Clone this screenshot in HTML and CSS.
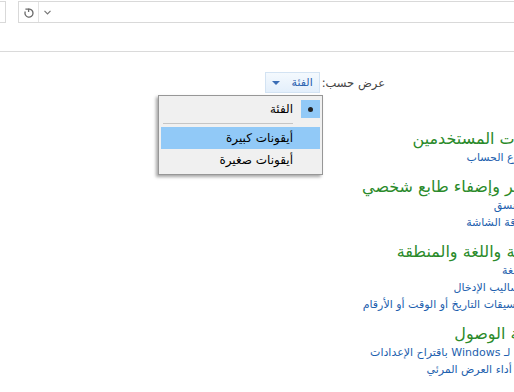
FILE: index.html
```html
<!DOCTYPE html>
<html lang="ar">
<head>
    <meta charset="UTF-8">
    <meta name="viewport" content="width=device-width, initial-scale=1.0">
    <title>لوحة التحكم</title>
    <link rel="stylesheet" href="styles.css">
</head>
<body>
    <div class="toolbar">
        <div class="search-box"></div>
        <div class="address-bar">
            <span class="refresh">
                <svg width="12" height="12" viewBox="0 0 12 12">
                    <path d="M5.3 3.2A4 4 0 1 1 2.3 5.6" fill="none" stroke="#6a6a6a" stroke-width="1.3"/>
                    <path d="M2.4 3.2H5.6V6" fill="none" stroke="#6a6a6a" stroke-width="1.3"/>
                </svg>
            </span>
            <span class="history">
                <svg width="7" height="5" viewBox="0 0 7 5">
                    <polyline points="0.5,0.8 3.5,3.8 6.5,0.8" fill="none" stroke="#777" stroke-width="1.2"/>
                </svg>
            </span>
        </div>
    </div>
    <div class="divider"></div>

    <div class="view-bar">
        <button class="view-button"><span class="caret"></span><span>الفئة</span></button>
        <span class="view-label">عرض حسب:</span>
    </div>

    <ul class="menu">
        <li class="menu-item checked"><span class="gutter"><span class="dot"></span></span><span class="menu-text">الفئة</span></li>
        <li class="menu-sep"></li>
        <li class="menu-item active"><span class="gutter"></span><span class="menu-text">أيقونات كبيرة</span></li>
        <li class="menu-item"><span class="gutter"></span><span class="menu-text">أيقونات صغيرة</span></li>
    </ul>

    <div class="categories">
        <div class="category">
            <h3>حسابات المستخدمين</h3>
            <a href="#">تغيير نوع الحساب</a>
        </div>
        <div class="category">
            <h3>المظهر وإضفاء طابع شخصي</h3>
            <a href="#">تغيير النسق</a>
            <a href="#">ضبط دقة الشاشة</a>
        </div>
        <div class="category">
            <h3>الساعة واللغة والمنطقة</h3>
            <a href="#">إضافة لغة</a>
            <a href="#">تغيير أساليب الإدخال</a>
            <a href="#">تغيير تنسيقات التاريخ أو الوقت أو الأرقام</a>
        </div>
        <div class="category">
            <h3>سهولة الوصول</h3>
            <a href="#">السماح لـ Windows باقتراح الإعدادات</a>
            <a href="#">تحسين أداء العرض المرئي</a>
        </div>
    </div>
</body>
</html>
```

FILE: styles.css
```css
body {
    margin: 0;
    width: 514px;
    height: 392px;
    overflow: hidden;
    position: relative;
    background: #fff;
    font-family: "DejaVu Sans", sans-serif;
    color: #000;
}
.toolbar {
    display: flex;
    gap: 12px;
    padding-top: 1px;
    height: 23px;
    box-sizing: border-box;
}
.search-box {
    width: 5px;
    height: 20px;
    border: 1px solid #d9d9d9;
    border-left: none;
}
.address-bar {
    flex: 1;
    display: flex;
    align-items: center;
    height: 20px;
    margin-right: -4px;
    border: 1px solid #d9d9d9;
}
.refresh {
    width: 19px;
    height: 100%;
    display: flex;
    align-items: center;
    justify-content: center;
    border-right: 1px solid #e3e3e3;
}
.history {
    display: flex;
    padding-left: 5px;
}
.divider {
    margin-top: 28px;
    height: 1px;
    background: #dadada;
}
.view-bar {
    display: flex;
    justify-content: flex-end;
    align-items: center;
    gap: 2px;
    margin-top: 20px;
    padding-right: 129px;
}
.view-label {
    direction: rtl;
    font-size: 11.5px;
    color: #444;
}
.view-button {
    display: flex;
    align-items: center;
    justify-content: center;
    gap: 12px;
    width: 55px;
    height: 21px;
    padding: 0;
    border: 1px solid #d3e3f3;
    background: linear-gradient(#f4f9fe, #e3effb);
    font-family: inherit;
    font-size: 11px;
    color: #2a62b0;
}
.caret {
    width: 0;
    height: 0;
    border-left: 4px solid transparent;
    border-right: 4px solid transparent;
    border-top: 4px solid #3a6db5;
}
.menu {
    position: absolute;
    left: 158px;
    top: 95px;
    width: 165px;
    box-sizing: border-box;
    margin: 0;
    padding: 2px 2px 3px;
    list-style: none;
    direction: rtl;
    background: #f0f0f0;
    border: 1px solid #979797;
    box-shadow: -2px 2px 3px rgba(0, 0, 0, 0.35);
}
.menu-item {
    display: flex;
    align-items: center;
    height: 22px;
    font-size: 12px;
}
.menu-item.active {
    background: #91c9f7;
}
.gutter {
    width: 19px;
    height: 18px;
    display: flex;
    align-items: center;
    justify-content: center;
}
.checked .gutter {
    background: #91c9f7;
}
.dot {
    width: 5px;
    height: 5px;
    border-radius: 50%;
    background: #222;
}
.menu-text {
    margin-right: 8px;
}
.menu-sep {
    height: 1px;
    margin: 3px 27px 3px 2px;
    background: #c5c5c5;
}
.categories {
    direction: rtl;
    margin-top: 36px;
    margin-right: -33px;
}
.category {
    margin-bottom: 11px;
}
.category h3 {
    margin: 0 -6px 0 0;
    font-size: 16px;
    line-height: 20px;
    font-weight: normal;
    color: #2a8a2a;
}
.category a {
    display: block;
    font-size: 11px;
    line-height: 17px;
    color: #1e5fae;
    text-decoration: none;
}
```
